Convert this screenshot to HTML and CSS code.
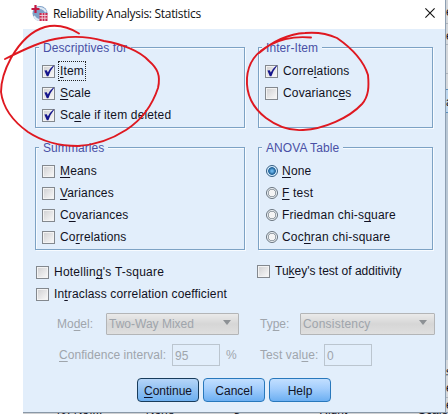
FILE: index.html
```html
<!DOCTYPE html>
<html lang="en">
<head>
<meta charset="utf-8">
<title>Reliability Analysis: Statistics</title>
<link rel="stylesheet" href="styles.css">
</head>
<body>
<svg width="0" height="0" class="defs"><defs>
<symbol id="tick" viewBox="0 0 13 13"><path d="M2.4 5.4 L4.8 5.2 L5.8 7.4 Q7.700 3.600 11.400 .5 L12 1 Q8.300 5.400 6.400 11.200 L4.800 11.200 Z" fill="#15158c"/></symbol>
</defs></svg>
<div class="screen">
<main class="dialog">
  <header class="titlebar">
    <svg class="app" width="17" height="17" viewBox="0 0 17 17"><circle cx="9" cy="8.5" r="7.5" fill="#7d9fc6"/><path d="M5 4a7 7 0 0 1 10 3M3 11a7 7 0 0 0 6 4" stroke="#dce8f4" stroke-width="2" fill="none"/><path d="M4.500 0v8M.5 4h8" stroke="#c31842" stroke-width="2.200"/><path d="M8.500 8h8v8h-8z" fill="#c9294f"/><path d="M8.500 10.500h8M8.500 13.200h8M11.200 8v8M13.900 8v8" stroke="#f1d7e0" stroke-width=".9"/></svg>
    <h1 class="title">Reliability Analysis: Statistics</h1>
    <svg class="close" width="10" height="10" viewBox="0 0 10 10"><path d="M.4.4l9.2 9.2M9.6.4L.4 9.6" stroke="#111" stroke-width="1.1"/></svg>
  </header>
  <div class="groups">
    <section class="group"><h2 class="legend">Descriptives for</h2>
      <label class="opt"><i class="box"><svg><use href="#tick"/></svg></i><span class="focus"><u>I</u>tem</span></label>
      <label class="opt"><i class="box"><svg><use href="#tick"/></svg></i><span><u>S</u>cale</span></label>
      <label class="opt"><i class="box"><svg><use href="#tick"/></svg></i><span>Sc<u>a</u>le if item deleted</span></label>
    </section>
    <section class="group"><h2 class="legend">Inter-Item</h2>
      <label class="opt"><i class="box"><svg><use href="#tick"/></svg></i><span>Corre<u>l</u>ations</span></label>
      <label class="opt"><i class="box"></i><span>Covarianc<u>e</u>s</span></label>
    </section>
    <section class="group"><h2 class="legend">Summaries</h2>
      <label class="opt"><i class="box"></i><span><u>M</u>eans</span></label>
      <label class="opt"><i class="box"></i><span><u>V</u>ariances</span></label>
      <label class="opt"><i class="box"></i><span>C<u>o</u>variances</span></label>
      <label class="opt"><i class="box"></i><span>Co<u>r</u>relations</span></label>
    </section>
    <section class="group anova"><h2 class="legend">ANOVA Table</h2>
      <label class="opt"><i class="radio on"></i><span><u>N</u>one</span></label>
      <label class="opt"><i class="radio"></i><span><u>F</u> test</span></label>
      <label class="opt"><i class="radio"></i><span>Friedman chi-s<u>q</u>uare</span></label>
      <label class="opt"><i class="radio"></i><span>Coc<u>h</u>ran chi-square</span></label>
    </section>
  </div>
  <div class="extras">
    <label class="opt hotelling"><i class="box"></i><span>Hotellin<u>g</u>'s T-square</span></label>
    <label class="opt tukey"><i class="box"></i><span>Tu<u>k</u>ey's test of additivity</span></label>
    <label class="opt"><i class="box"></i><span>In<u>t</u>raclass correlation coefficient</span></label>
  </div>
  <div class="fields model">
    <span class="lab-model">Mo<u>d</u>el:</span><div class="combo first"><span>Two-Way Mixed</span><b></b></div>
    <span class="lab-type">Ty<u>p</u>e:</span><div class="combo second"><span>Consistency</span><b></b></div>
  </div>
  <div class="fields conf">
    <span class="lab-conf"><u>C</u>onfidence interval:</span><div class="input">95</div><span class="pct">%</span>
    <span class="lab-test">Test val<u>u</u>e:</span><div class="input">0</div>
  </div>
  <footer class="buttons">
    <button class="default"><u>C</u>ontinue</button><button>Cancel</button><button>Help</button>
  </footer>
</main>
<aside class="side">
  <span class="cell c1">e</span><span class="cell c2">e</span><span class="cell c3"></span><span class="cell c4">a</span><span class="cell c5"></span><span class="cell c6">s</span><span class="cell c7">e</span><span class="cell c8">e</span>
</aside>
<div class="under"><span class="w1">[0, No]...</span><span class="w2">None</span><span class="w3">8</span><span class="w4">Right</span><span class="w5">Scale</span></div>
</div>
<svg class="marks" width="448" height="414" viewBox="0 0 448 414">
<path d="M79 33.500C67 26 57 24 45 27C31 31 19 44 11 58C5 69 1 80 1 92C3 108 14 122 28 132C43 142 61 146 78 146C97 145 112 139 126 130C143 119 153 103 158 88C161 75 157 68 149 61C140 51 122 44 104 41C90 37 74 36 61 38C44 40 25 49 5 59"/>
<path d="M311 37.500C295 36 281 39 270 45C256 52 248 64 247 78C246 94 253 108 266 118C278 127 290 131 303 130C324 129 349 118 362 104C369 96 369 86 368 75C363 59 350 47 337 38C326 33 316 32 305 33C287 34 272 42 259 53"/>
</svg>
</body>
</html>
```
FILE: styles.css
```css
* { box-sizing: border-box; }
body { margin: 0; background: #fff; font: 12px "Liberation Sans", sans-serif; color: #111122; overflow: hidden; }
.defs { position: absolute; }
.screen { width: 448px; height: 414px; display: grid; grid-template-columns: 422px 3px; grid-template-rows: 412px 2px; padding-left: 23px; }
.dialog { background: #e2eefb; display: flex; flex-direction: column; }
.titlebar { height: 29px; background: #fff; display: flex; align-items: center; padding: 0 10px 3px 8px; }
.title { margin: 0 0 0 5px; font: 12px "Open Sans", sans-serif; color: #111; letter-spacing: -.3px; flex: 1; white-space: nowrap; }
.groups { display: grid; grid-template-columns: 210px 175px; grid-template-rows: 81px 103px; gap: 19px 13px; padding: 18px 0 0 12px; }
.group { border: 1px solid #7da2c4; box-shadow: 1px 1px #f7fbff, inset 1px 1px #f7fbff; padding: 0 0 0 6px; }
.legend { margin: -8px 0 5px -3px; padding: 0 4px; width: max-content; height: 15px; line-height: 17px; font-size: 12px; font-weight: 400; color: #4950a5; background: #e2eefb; letter-spacing: .08px; }
.opt { display: flex; align-items: center; height: 22px; gap: 5px; white-space: nowrap; letter-spacing: .15px; }
.anova .opt { letter-spacing: .2px; }
.opt.hotelling { letter-spacing: .23px; }
.opt.tukey { letter-spacing: 0; }
u { text-underline-offset: 2px; text-decoration-thickness: 1px; }
.box { flex: none; width: 13px; height: 13px; border: 1px solid #83888e; background: linear-gradient(135deg, #cfcfd1, #fafafa); box-shadow: inset 0 0 0 1px #f3f3f3; }
.box svg { display: block; width: 13px; height: 13px; margin: -1px; overflow: visible; }
.radio { flex: none; width: 12px; height: 12px; border-radius: 50%; border: 1px solid #69747e; background: radial-gradient(circle, #f4f4f4 0 3px, #9ba3aa 3.400px 4px, #eef3f7 4.500px); margin-left: 1px; }
.radio + span { margin-left: -1px; }
.radio.on { border-color: #345e83; background: radial-gradient(circle, #68b2e8 0 1px, #286a9f 3px 3.500px, #d6edff 4.200px); }
.focus { outline: 1px dotted #222; outline-offset: 1px; height: 16px; line-height: 16px; }
.extras { display: grid; grid-template-columns: 221px 180px; grid-template-rows: 22px 22px; padding: 11px 0 0 13px; }
.tukey { margin-top: -1px; }
.fields { display: flex; align-items: center; color: #9fa5ac; white-space: nowrap; height: 22px; }
.model { margin: 8px 0 0 34px; }
.conf { margin: 9px 0 0 36px; }
.lab-model { width: 49px; }
.lab-conf { width: 113px; letter-spacing: .05px; }
.lab-type { width: 40px; margin-left: 21px; }
.lab-test { width: 64px; letter-spacing: .1px; }
.pct { width: 40px; padding-left: 6px; }
.combo { height: 22px; width: 133px; border: 1px solid #b3b5b7; border-radius: 1px; background: linear-gradient(#eaeaea, #d6d6d6 50%, #dfdfdf); display: flex; align-items: center; justify-content: space-between; padding: 0 7px 0 2px; }
.combo.second { width: 135px; letter-spacing: .2px; }
.combo b { border: 4px solid transparent; border-top: 5px solid #8d9195; border-bottom: 0; margin-bottom: 3px; }
.input { height: 22px; width: 48px; border: 1px solid #bbc5cf; padding: 4px 2px 0; line-height: 14px; }
.buttons { display: flex; gap: 4px; margin: 12px 0 0 114px; }
button { width: 62px; height: 24px; border: 1px solid #2878bc; border-radius: 4px; background: linear-gradient(#c2dfff, #a2cdfc 45%, #6caff2); color: #101327; font: 12px "Liberation Sans", sans-serif; padding: 1px 0 0; }
button.default { border: 1.500px solid #183c5c; background: linear-gradient(#b5d5f8, #91c1f2 50%, #6caff0); }
.side { display: grid; grid-template-rows: 24px 21px 29px 39px 247px 16px 22px 14px; background: #d4d7db; border-left: 1px solid #8d9fb2; overflow: hidden; }
.cell { overflow: hidden; border-bottom: 1px solid #aeb4bb; line-height: 24px; font-size: 12px; }
.c4 { background: #bcd5ed; border-top: 1px solid #5c91bf; border-bottom-color: #5c91bf; margin-top: 15px; }
.c5 { background: #b9c7d5; border: 0; }
.c8 { line-height: 14px; border: 0; }
.under { grid-column: 1 / 3; background: #cfd0d2; border-top: 1px solid #8998a7; display: flex; overflow: hidden; height: 2px; line-height: 0; font-size: 12px; }
.under span { margin-top: -3px; white-space: nowrap; }
.w1 { width: 89px; margin-left: 34px; } .w2 { width: 88px; } .w3 { width: 86px; } .w4 { width: 99px; }
.marks { position: absolute; left: 0; top: 0; fill: none; stroke: #df1820; stroke-width: 1.900; stroke-linecap: round; pointer-events: none; }
```
